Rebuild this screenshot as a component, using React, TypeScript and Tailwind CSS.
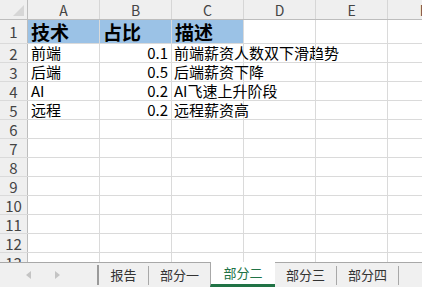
const cols = ["A", "B", "C", "D", "E", "F"];

type Row = { a?: string; b?: string; c?: string };

const rows: Row[] = [
  { a: "前端", b: "0.1", c: "前端薪资人数双下滑趋势" },
  { a: "后端", b: "0.5", c: "后端薪资下降" },
  { a: "AI", b: "0.2", c: "AI飞速上升阶段" },
  { a: "远程", b: "0.2", c: "远程薪资高" },
  {}, {}, {}, {}, {}, {}, {}, {},
];

const tabs = ["报告", "部分一", "部分二", "部分三", "部分四"];

function Cell({ children, className = "" }: { children?: React.ReactNode; className?: string }) {
  return (
    <div className={`w-[72px] shrink-0 border-r border-[#dadada] flex items-center whitespace-nowrap ${className}`}>
      {children}
    </div>
  );
}

export default function App() {
  return (
    <div className="w-[422px] h-[287px] overflow-hidden bg-white font-['Noto_Sans_CJK_SC',sans-serif] text-black">
      <div className="h-[262px] overflow-hidden">
        {/* column header */}
        <div className="flex h-[20px] bg-[#efefef] border-b border-[#bdbdbd]">
          <div className="relative w-[28px] shrink-0 border-r border-[#bdbdbd]">
            <svg className="absolute left-[13px] top-[5px]" width="12" height="12" viewBox="0 0 12 12">
              <polygon points="11,0 11,11 0,11" fill="#d6d6d6" />
            </svg>
          </div>
          {cols.map((c) => (
            <div
              key={c}
              className="w-[72px] shrink-0 border-r border-[#d6d6d6] flex items-center justify-center text-[14px] leading-none text-[#444]"
            >
              {c}
            </div>
          ))}
        </div>

        {/* row 1 */}
        <div className="flex h-[24px] border-b border-[#dadada]">
          <div className="w-[28px] shrink-0 bg-[#efefef] border-r border-[#bdbdbd] flex items-center justify-center text-[15px] leading-none text-[#444]">
            1
          </div>
          <Cell className="bg-[#9bc2e6] text-[19px] font-bold leading-[20px] pl-[3px]">技术</Cell>
          <Cell className="bg-[#9bc2e6] text-[19px] font-bold leading-[20px] pl-[3px]">占比</Cell>
          <Cell className="bg-[#9bc2e6] text-[19px] font-bold leading-[20px] pl-[3px]">描述</Cell>
          <Cell />
          <Cell />
          <Cell />
        </div>

        {rows.map((r, i) => (
          <div key={i} className="flex h-[19px] border-b border-[#dadada]">
            <div className="w-[28px] shrink-0 bg-[#efefef] border-r border-[#bdbdbd] flex items-center justify-center text-[15px] leading-none text-[#444]">
              {i + 2}
            </div>
            <Cell className="text-[15px] leading-[16px] pl-[3px]">{r.a}</Cell>
            <Cell className="text-[15px] leading-[16px] pr-[3px] justify-end">{r.b}</Cell>
            <Cell className="text-[15px] leading-[16px] pl-[2px]">{r.c}</Cell>
            <Cell />
            <Cell />
            <Cell />
          </div>
        ))}
      </div>

      {/* sheet tabs */}
      <div className="flex h-[25px] bg-[#f0f0f0] border-t border-[#a8a8a8] text-[13px] text-[#333]">
        <div className="w-[99px] shrink-0 flex items-center gap-[24px] pl-[26px] border-r-2 border-[#9a9a9a] my-[2px]">
          <svg width="5" height="8" viewBox="0 0 5 8">
            <polygon points="5,0 5,8 0,4" fill="#c4c4c4" />
          </svg>
          <svg width="5" height="8" viewBox="0 0 5 8">
            <polygon points="0,0 0,8 5,4" fill="#c4c4c4" />
          </svg>
        </div>
        {tabs.map((t) => {
          const active = t === "部分二";
          return active ? (
            <div
              key={t}
              className="-mt-px w-[65px] shrink-0 bg-white border-l border-[#a8a8a8] border-b-[3px] border-b-[#217346] flex items-center justify-center text-[#217346]"
            >
              {t}
            </div>
          ) : (
            <div key={t} className="flex items-center shrink-0">
              <div className={`${t === "报告" ? "w-[49px]" : "w-[61px]"} text-center`}>{t}</div>
              {t !== "部分一" && <div className="w-px h-[19px] bg-[#a8a8a8]" />}
            </div>
          );
        })}
      </div>
    </div>
  );
}
